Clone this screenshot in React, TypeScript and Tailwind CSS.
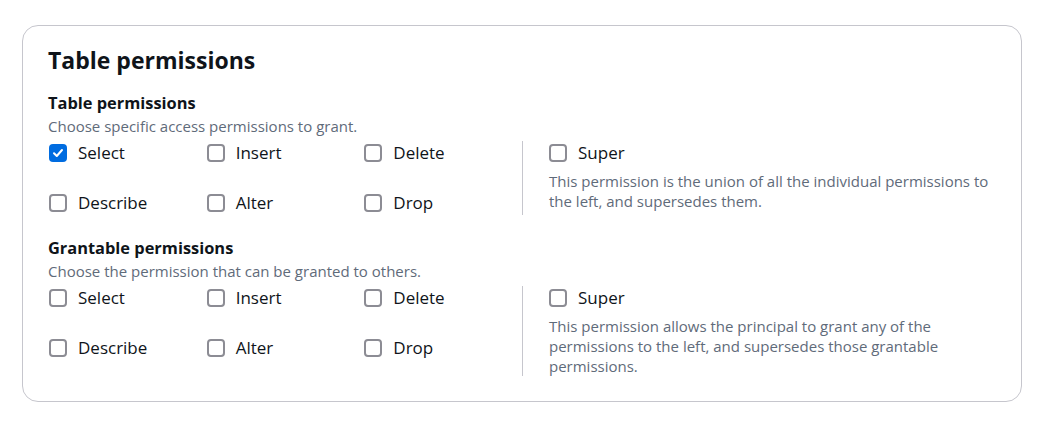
import { useState } from "react"

type Perm = "Select" | "Insert" | "Delete" | "Describe" | "Alter" | "Drop" | "Super"

const GRID: Perm[] = ["Select", "Insert", "Delete", "Describe", "Alter", "Drop"]

function Checkbox({ label, checked, onToggle }: { label: string; checked: boolean; onToggle: () => void }) {
  return (
    <label className="flex h-6 items-center gap-[11px] cursor-pointer select-none" onClick={onToggle}>
      <span
        className={
          checked
            ? "flex h-[18px] w-[18px] items-center justify-center rounded-[4px] bg-[#006ce0]"
            : "h-[18px] w-[18px] rounded-[4px] border-2 border-[#8c8c94] bg-white"
        }
      >
        {checked && (
          <svg width="12" height="12" viewBox="0 0 12 12" fill="none">
            <path d="M2 6.2 4.8 9 10 3" stroke="white" strokeWidth="2" strokeLinecap="round" strokeLinejoin="round" />
          </svg>
        )}
      </span>
      <span className="text-[17px] leading-6 text-[#0f141a]">{label}</span>
    </label>
  )
}

function PermissionGroup({
  title,
  description,
  superText,
  initial
}: {
  title: string
  description: string
  superText: string
  initial: Perm[]
}) {
  const [selected, setSelected] = useState<Perm[]>(initial)
  const toggle = (p: Perm) =>
    setSelected(s => (s.includes(p) ? s.filter(x => x !== p) : [...s, p]))

  return (
    <div>
      <h3 className="text-[16.4px] font-bold leading-[22px] text-[#0f141a]">{title}</h3>
      <p className="mt-[2px] text-[15px] leading-5 text-[#5f6b7a]">{description}</p>
      <div className="mt-[5px] flex">
        <div className="grid w-[474px] grid-cols-3 content-start gap-y-[26px] pl-px">
          {GRID.map(p => (
            <Checkbox key={p} label={p} checked={selected.includes(p)} onToggle={() => toggle(p)} />
          ))}
        </div>
        <div className="w-px bg-[#c6c6cd]" />
        <div className="flex-1 pl-[26px]">
          <Checkbox label="Super" checked={selected.includes("Super")} onToggle={() => toggle("Super")} />
          <p className="mt-[6px] text-[15px] leading-5 text-[#5f6b7a]">{superText}</p>
        </div>
      </div>
    </div>
  )
}

export default function App() {
  return (
    <div className="min-h-screen bg-white px-[22px] pt-[25px] font-['Open_Sans',sans-serif]">
      <div className="w-[1000px] rounded-[16px] border border-[#c6c6cd] px-[25px] pt-[19px] pb-[25px]">
        <h2 className="text-[23px] font-bold leading-[30px] text-[#0f141a]">Table permissions</h2>
        <div className="mt-[17px] flex flex-col gap-[22px]">
          <PermissionGroup
            title="Table permissions"
            description="Choose specific access permissions to grant."
            superText="This permission is the union of all the individual permissions to the left, and supersedes them."
            initial={["Select"]}
          />
          <PermissionGroup
            title="Grantable permissions"
            description="Choose the permission that can be granted to others."
            superText="This permission allows the principal to grant any of the permissions to the left, and supersedes those grantable permissions."
            initial={[]}
          />
        </div>
      </div>
    </div>
  )
}
